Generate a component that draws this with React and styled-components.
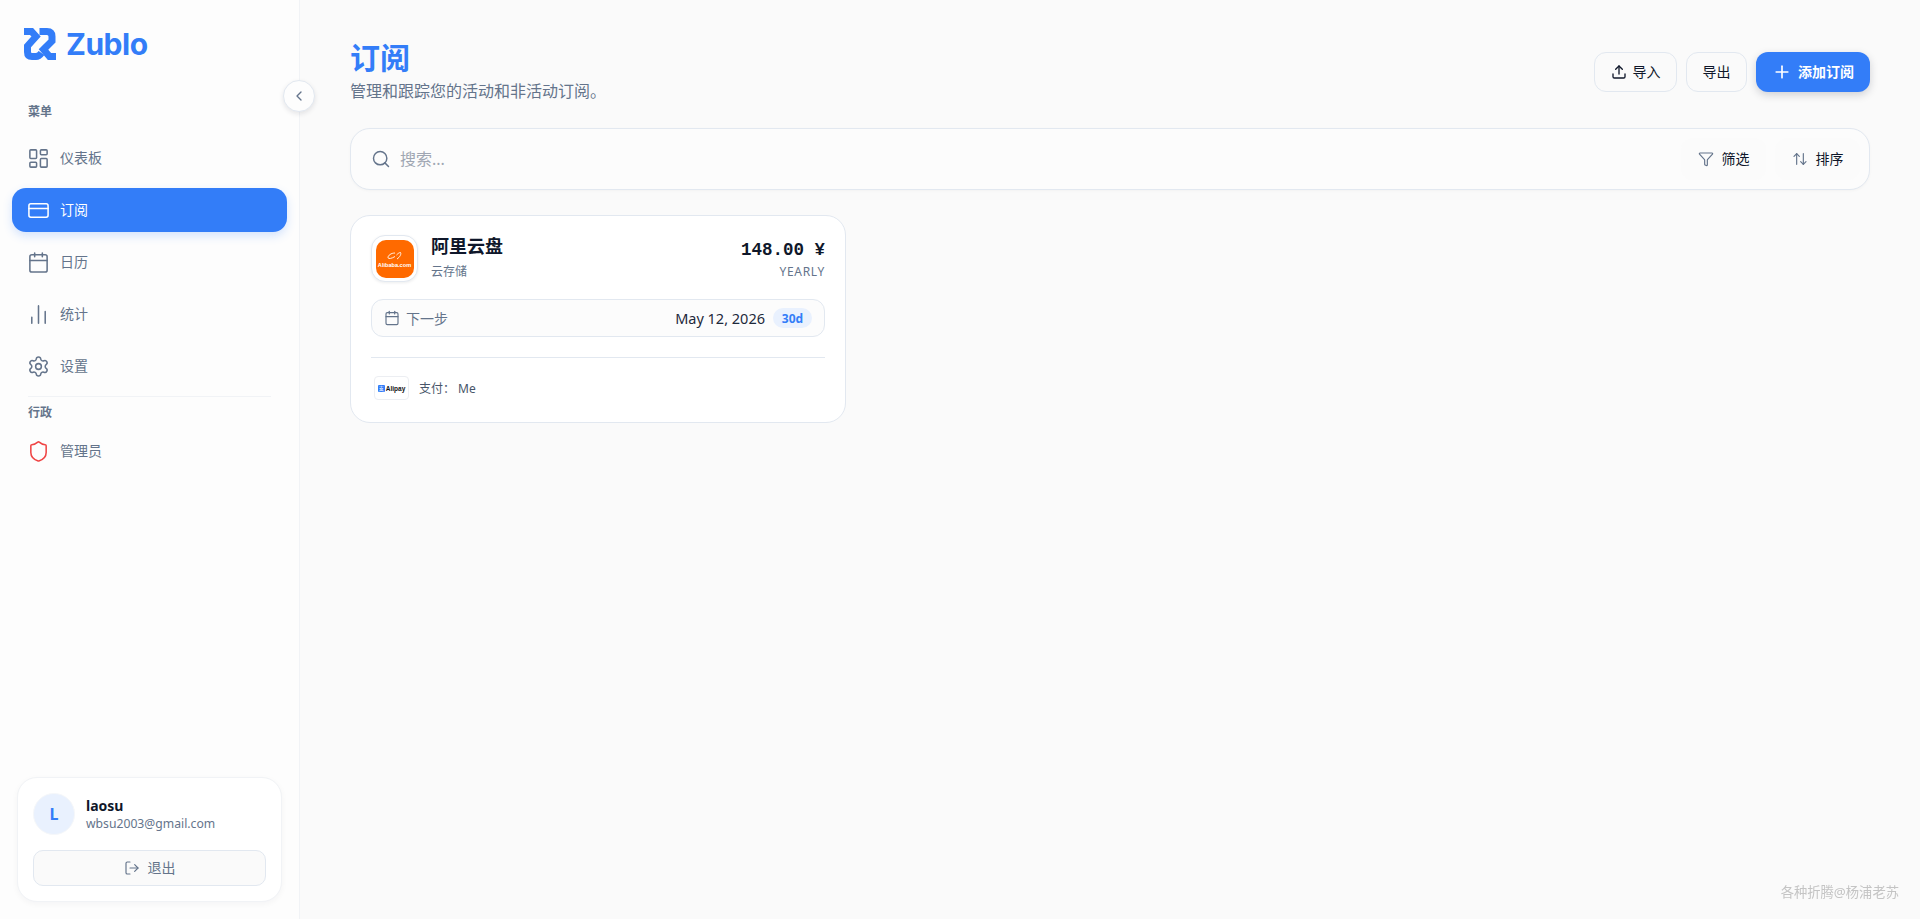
import React from "react";
import styled, { createGlobalStyle } from "styled-components";
import {
  ArrowUpDown,
  Calendar,
  ChartNoAxesColumn,
  ChevronLeft,
  CreditCard,
  Funnel,
  LayoutDashboard,
  LogOut,
  Plus,
  Search,
  Settings,
  Shield,
  Upload,
} from "lucide-react";

const SANS = `"Noto Sans", "Noto Sans CJK SC", sans-serif`;

const GlobalStyle = createGlobalStyle`
  * { box-sizing: border-box; }
  html, body { margin: 0; padding: 0; background: #fafafa; }
  body { font-family: ${SANS}; color: #0f172a; }
`;

const menuItems = [
  { label: "仪表板", Icon: LayoutDashboard },
  { label: "订阅", Icon: CreditCard, active: true },
  { label: "日历", Icon: Calendar },
  { label: "统计", Icon: ChartNoAxesColumn },
  { label: "设置", Icon: Settings },
];

function LogoMark() {
  return (
    <svg width="32" height="32" viewBox="0 0 32 32" fill="none">
      <path
        d="M0 3.500H7.500L12 8.500L3.500 18V24Q3.500 28.500 8 28.500H12Q15 28.500 17.500 25"
        stroke="#337df8"
        strokeWidth="7"
      />
      <path
        d="M15.500 3.500H23Q28 3.500 28 8.500V13L19.500 21.500L25.500 28.500H32"
        stroke="#337df8"
        strokeWidth="7"
      />
    </svg>
  );
}

function AlibabaLogo() {
  return (
    <AlibabaTile>
      <svg width="15" height="8" viewBox="0 0 15 8" fill="none">
        <path
          d="M8 1C4 1 1 3.500 1 5.500C1 7 4 7 8 4.500M13.500 0.500C14.500 2 13 5 10 7M13.500 0.500C12 0.500 10.500 2 9.500 3"
          stroke="#fff"
          strokeWidth="0.9"
        />
      </svg>
      <AlibabaText>Alibaba.com</AlibabaText>
    </AlibabaTile>
  );
}

export default function App() {
  return (
    <Page>
      <GlobalStyle />
      <Sidebar>
        <CollapseButton>
          <ChevronLeft size={16} strokeWidth={2} />
        </CollapseButton>
        <Logo>
          <LogoMark />
          <LogoText>Zublo</LogoText>
        </Logo>
        <SectionLabel $first>菜单</SectionLabel>
        <Nav>
          {menuItems.map(({ label, Icon, active }) => (
            <NavItem key={label} $active={active}>
              <Icon size={23} strokeWidth={1.6} />
              <Label>{label}</Label>
            </NavItem>
          ))}
        </Nav>
        <NavDivider />
        <SectionLabel>行政</SectionLabel>
        <Nav>
          <NavItem>
            <Shield size={23} strokeWidth={1.6} color="#ef4444" />
            <Label>管理员</Label>
          </NavItem>
        </Nav>
        <UserCard>
          <UserRow>
            <Avatar>L</Avatar>
            <div>
              <UserName>laosu</UserName>
              <UserEmail>wbsu2003@gmail.com</UserEmail>
            </div>
          </UserRow>
          <LogoutButton>
            <LogOut size={16} strokeWidth={1.75} />
            <Label>退出</Label>
          </LogoutButton>
        </UserCard>
      </Sidebar>

      <Main>
        <Header>
          <div>
            <Title>订阅</Title>
            <Subtitle>管理和跟踪您的活动和非活动订阅。</Subtitle>
          </div>
          <Actions>
            <OutlineButton>
              <Upload size={16} strokeWidth={2} />
              <Label>导入</Label>
            </OutlineButton>
            <OutlineButton>
              <Label>导出</Label>
            </OutlineButton>
            <PrimaryButton>
              <Plus size={20} strokeWidth={2} />
              <Label>添加订阅</Label>
            </PrimaryButton>
          </Actions>
        </Header>

        <SearchBar>
          <SearchField>
            <Search size={20} strokeWidth={1.75} color="#64748b" />
            <SearchInput placeholder="搜索..." readOnly />
          </SearchField>
          <ToolButton>
            <Funnel size={16} strokeWidth={1.75} color="#64748b" />
            <Label>筛选</Label>
          </ToolButton>
          <ToolButton>
            <ArrowUpDown size={16} strokeWidth={1.75} color="#64748b" />
            <Label>排序</Label>
          </ToolButton>
        </SearchBar>

        <Card>
          <CardTop>
            <IconFrame>
              <AlibabaLogo />
            </IconFrame>
            <CardTitles>
              <CardName>阿里云盘</CardName>
              <CardCategory>云存储</CardCategory>
            </CardTitles>
            <CardPrice>
              <Price>148.00 ¥</Price>
              <Cycle>YEARLY</Cycle>
            </CardPrice>
          </CardTop>
          <NextRow>
            <NextLabel>
              <Calendar size={16} strokeWidth={1.75} />
              下一步
            </NextLabel>
            <NextDate>
              May 12, 2026
              <DaysBadge>30d</DaysBadge>
            </NextDate>
          </NextRow>
          <CardFooter>
            <PayLogo>
              <PayMark>支</PayMark>
              <PayText>Alipay</PayText>
            </PayLogo>
            <PayLabel>支付： Me</PayLabel>
          </CardFooter>
        </Card>
      </Main>

      <Watermark>各种折腾@杨浦老苏</Watermark>
    </Page>
  );
}

const Page = styled.div`
  display: flex;
  min-height: 919px;
  height: 100vh;
  overflow: hidden;
  background: #fafafa;
`;

const Sidebar = styled.aside`
  position: relative;
  flex: 0 0 300px;
  display: flex;
  flex-direction: column;
  padding: 28px 12px 17px;
  background: #fdfdfd;
  border-right: 1px solid #f1f3f6;
`;

const CollapseButton = styled.button`
  position: absolute;
  top: 80px;
  right: -16px;
  z-index: 2;
  width: 32px;
  height: 32px;
  padding: 0;
  display: flex;
  align-items: center;
  justify-content: center;
  color: #64748b;
  background: #fdfdfd;
  border: 1px solid #e2e8f0;
  border-radius: 50%;
  box-shadow: 0 2px 5px rgba(15, 23, 42, 0.1);
`;

const Logo = styled.div`
  display: flex;
  align-items: center;
  gap: 10px;
  height: 32px;
  padding-left: 12px;
`;

const LogoText = styled.span`
  font-family: Inter, sans-serif;
  font-size: 30px;
  font-weight: 700;
  line-height: 32px;
  letter-spacing: -0.5px;
  color: #337df8;
`;

const Label = styled.span`
  padding-bottom: 2px;
`;

const SectionLabel = styled.div`
  margin-top: ${(p) => (p.$first ? "43px" : "7px")};
  margin-bottom: ${(p) => (p.$first ? "15px" : "7px")};
  padding-left: 16px;
  font-size: 12px;
  font-weight: 700;
  line-height: 18px;
  color: #64748b;
`;

const Nav = styled.nav`
  display: flex;
  flex-direction: column;
  gap: 8px;
`;

const NavItem = styled.a`
  display: flex;
  align-items: center;
  gap: 10px;
  height: 44px;
  padding-left: 15px;
  font-size: 14px;
  color: ${(p) => (p.$active ? "#fff" : "#64748b")};
  background: ${(p) => (p.$active ? "#337df8" : "transparent")};
  border-radius: 14px;
  box-shadow: ${(p) => (p.$active ? "0 4px 10px rgba(51, 125, 248, 0.2)" : "none")};
`;

const NavDivider = styled.div`
  height: 1px;
  margin: 8px 16px 0;
  background: #f1f3f6;
`;

const UserCard = styled.div`
  margin: auto 5px 0;
  padding: 15px;
  background: #fff;
  border: 1px solid #f1f3f6;
  border-radius: 20px;
  box-shadow: 0 2px 6px rgba(15, 23, 42, 0.04);
`;

const UserRow = styled.div`
  display: flex;
  align-items: center;
  gap: 11px;
`;

const Avatar = styled.div`
  width: 42px;
  height: 42px;
  display: flex;
  align-items: center;
  justify-content: center;
  font-size: 16px;
  font-weight: 700;
  color: #337df8;
  background: #e9f1fe;
  border: 1px solid #f5f7fa;
  border-radius: 50%;
`;

const UserName = styled.div`
  font-size: 14px;
  font-weight: 700;
  line-height: 19px;
`;

const UserEmail = styled.div`
  font-size: 12.2px;
  line-height: 18px;
  color: #64748b;
`;

const LogoutButton = styled.button`
  width: 100%;
  height: 36px;
  margin-top: 15px;
  display: flex;
  align-items: center;
  justify-content: center;
  gap: 8px;
  font-family: ${SANS};
  font-size: 14px;
  color: #64748b;
  background: #fafafa;
  border: 1px solid #e2e8f0;
  border-radius: 10px;
`;

const Main = styled.main`
  flex: 1;
  min-width: 0;
  padding: 40px 50px 0;
`;

const Header = styled.header`
  display: flex;
  align-items: flex-start;
  justify-content: space-between;
`;

const Title = styled.h1`
  margin: 0;
  font-size: 30px;
  font-weight: 700;
  line-height: 36px;
  color: #337df8;
`;

const Subtitle = styled.p`
  margin: 3px 0 0;
  font-size: 16px;
  line-height: 24px;
  color: #64748b;
`;

const Actions = styled.div`
  display: flex;
  align-items: center;
  gap: 9px;
  margin-top: 12px;
`;

const OutlineButton = styled.button`
  height: 40px;
  padding: 0 15.5px;
  display: flex;
  align-items: center;
  gap: 6px;
  font-family: ${SANS};
  font-size: 14px;
  color: #0f172a;
  background: #fafafa;
  border: 1px solid #e2e8f0;
  border-radius: 12px;
`;

const PrimaryButton = styled.button`
  height: 40px;
  padding: 0 16px;
  display: flex;
  align-items: center;
  gap: 6px;
  font-family: ${SANS};
  font-size: 14px;
  font-weight: 700;
  color: #fff;
  background: #337df8;
  border: none;
  border-radius: 12px;
  box-shadow: 0 3px 8px rgba(15, 23, 42, 0.18);
`;

const SearchBar = styled.div`
  height: 62px;
  margin-top: 25px;
  padding: 0 9px 0 20px;
  display: flex;
  align-items: center;
  gap: 9px;
  background: #fcfcfc;
  border: 1px solid #e2e8f0;
  border-radius: 20px;
  box-shadow: 0 1px 3px rgba(15, 23, 42, 0.03);
`;

const SearchField = styled.div`
  flex: 1;
  display: flex;
  align-items: center;
  gap: 9px;
`;

const SearchInput = styled.input`
  flex: 1;
  padding: 0;
  font-family: ${SANS};
  font-size: 16px;
  color: #0f172a;
  background: transparent;
  border: none;
  outline: none;

  &::placeholder {
    color: #a0a7b3;
  }
`;

const ToolButton = styled.button`
  width: 85px;
  height: 42px;
  display: flex;
  align-items: center;
  justify-content: center;
  gap: 8px;
  font-family: ${SANS};
  font-size: 14px;
  color: #0f172a;
  background: #fbfbfb;
  border: none;
  border-radius: 12px;
`;

const Card = styled.article`
  width: 496px;
  margin-top: 25px;
  padding: 19px 20px 22px;
  background: #fff;
  border: 1px solid #e2e8f0;
  border-radius: 20px;
`;

const CardTop = styled.div`
  display: flex;
  align-items: center;
  gap: 13px;
`;

const IconFrame = styled.div`
  width: 47px;
  height: 47px;
  display: flex;
  align-items: center;
  justify-content: center;
  background: #fff;
  border: 1px solid #e2e8f0;
  border-radius: 14px;
  box-shadow: 0 1px 3px rgba(15, 23, 42, 0.08);
`;

const AlibabaTile = styled.div`
  width: 38px;
  height: 38px;
  display: flex;
  flex-direction: column;
  align-items: center;
  justify-content: center;
  gap: 1px;
  padding-top: 3px;
  background: #ff6a00;
  border-radius: 10px;
`;

const AlibabaText = styled.span`
  font-family: "Liberation Sans", sans-serif;
  font-size: 5.6px;
  font-weight: 700;
  line-height: 8px;
  color: #fff;
`;

const CardTitles = styled.div`
  flex: 1;
  padding-bottom: 2px;
`;

const CardName = styled.div`
  font-size: 18px;
  font-weight: 700;
  line-height: 22px;
`;

const CardCategory = styled.div`
  margin-top: 7px;
  font-size: 12px;
  line-height: 16px;
  color: #64748b;
`;

const CardPrice = styled.div`
  text-align: right;
`;

const Price = styled.div`
  margin-bottom: 2px;
  font-family: "Liberation Mono", monospace;
  font-size: 17.5px;
  font-weight: 700;
  line-height: 24px;
`;

const Cycle = styled.div`
  font-size: 12px;
  line-height: 16px;
  letter-spacing: 0.7px;
  color: #64748b;
`;

const NextRow = styled.div`
  height: 38px;
  margin-top: 17px;
  padding: 0 12px;
  display: flex;
  align-items: center;
  justify-content: space-between;
  background: #fcfcfc;
  border: 1px solid #e2e8f0;
  border-radius: 12px;
`;

const NextLabel = styled.div`
  display: flex;
  align-items: center;
  gap: 6px;
  font-size: 14px;
  color: #64748b;
`;

const NextDate = styled.div`
  display: flex;
  align-items: center;
  gap: 8px;
  font-size: 14.5px;
  color: #1e293b;
`;

const DaysBadge = styled.span`
  width: 39px;
  height: 20px;
  display: flex;
  align-items: center;
  justify-content: center;
  font-size: 12px;
  font-weight: 700;
  color: #337df8;
  background: #e9f1fe;
  border-radius: 10px;
`;

const CardFooter = styled.div`
  margin-top: 20px;
  padding: 18px 3px 0;
  display: flex;
  align-items: center;
  gap: 10px;
  border-top: 1px solid #e2e8f0;
`;

const PayLogo = styled.div`
  width: 35px;
  height: 24px;
  display: flex;
  align-items: center;
  justify-content: center;
  gap: 1px;
  background: #fff;
  border: 1px solid #eceef2;
  border-radius: 4px;
`;

const PayMark = styled.span`
  width: 7px;
  height: 7px;
  font-size: 5px;
  line-height: 7px;
  text-align: center;
  color: #fff;
  background: #337df8;
  border-radius: 1px;
`;

const PayText = styled.span`
  font-family: "Liberation Sans", sans-serif;
  font-size: 6.5px;
  font-weight: 700;
  color: #111;
`;

const PayLabel = styled.span`
  font-size: 12px;
  color: #475569;
`;

const Watermark = styled.div`
  position: fixed;
  right: 21px;
  bottom: 18px;
  font-size: 13.3px;
  color: #c4c4c4;
`;
